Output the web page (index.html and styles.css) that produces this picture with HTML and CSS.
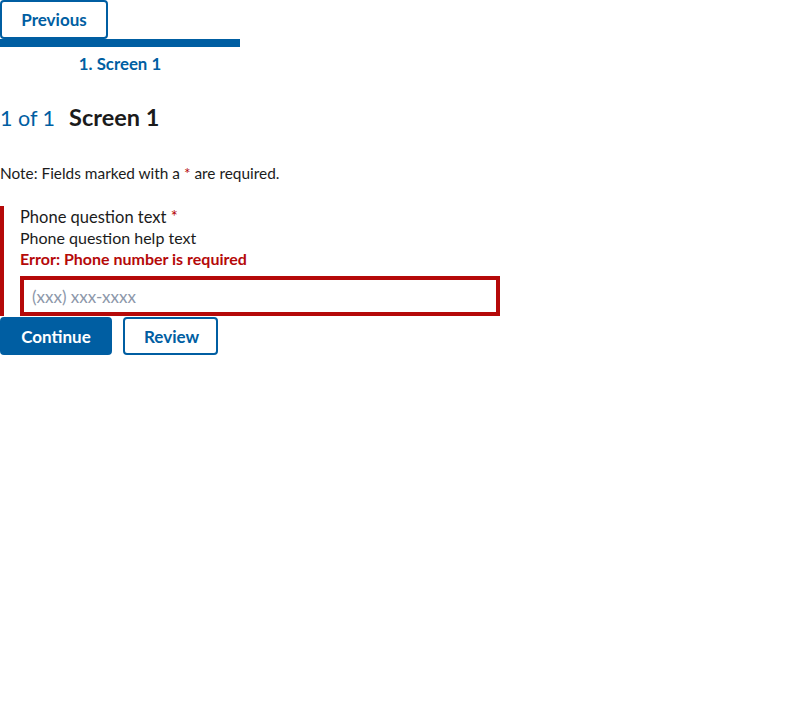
FILE: index.html
```html
<!DOCTYPE html>
<html>
<head>
<meta charset="utf-8">
<link rel="stylesheet" href="styles.css">
</head>
<body>
<div class="page">
  <button class="btn btn-outline prev">Previous</button>
  <div class="steps">
    <div class="step">
      <div class="step-bar"></div>
      <div class="step-label">1. Screen 1</div>
    </div>
  </div>
  <h2 class="heading"><span class="counter">1 of 1</span><span class="title">Screen 1</span></h2>
  <p class="note">Note: Fields marked with a <span class="req">*</span> are required.</p>
  <div class="form-group error">
    <label class="label">Phone question text <span class="req">*</span></label>
    <div class="hint">Phone question help text</div>
    <div class="err-msg">Error: Phone number is required</div>
    <input class="input" type="text" placeholder="(xxx) xxx-xxxx">
  </div>
  <div class="actions">
    <button class="btn btn-primary">Continue</button>
    <button class="btn btn-outline">Review</button>
  </div>
</div>
</body>
</html>
```
FILE: styles.css
```css
* { box-sizing: border-box; }
body {
  margin: 0;
  font-family: "Source Sans Pro", "Lato", "Liberation Sans", sans-serif;
  color: #1b1b1b;
  background: #fff;
}
.page { display: flex; flex-direction: column; align-items: flex-start; }
.btn {
  font-family: inherit;
  font-size: 17px;
  font-weight: 700;
  border-radius: 4px;
  height: 38px;
  padding: 0 19px;
  cursor: pointer;
  line-height: 1;
}
.btn-outline {
  background: #fff;
  color: #005ea2;
  border: 2px solid #005ea2;
}
.btn-primary {
  background: #005ea2;
  color: #fff;
  border: 2px solid #005ea2;
}
.prev { width: 108px; height: 39px; }
.steps { display: flex; width: 240px; margin-top: 0; }
.step { flex: 1; display: flex; flex-direction: column; align-items: center; }
.step-bar { width: 100%; height: 8px; background: #005ea2; }
.step-label {
  margin-top: 7px;
  font-size: 16.8px;
  font-weight: 700;
  color: #005ea2;
  line-height: 20px;
}
.heading {
  margin: 28px 0 0;
  display: flex;
  align-items: baseline;
  line-height: 30px;
}
.counter { font-size: 21.5px; font-weight: 400; color: #005ea2; margin-right: 14px; }
.title { font-size: 23.5px; font-weight: 700; color: #1b1b1b; }
.note { margin: 30px 0 0; font-size: 15.4px; line-height: 20px; }
.req { color: #b50909; }
.form-group {
  margin-top: 23px;
  padding-left: 16px;
  border-left: 4px solid #b50909;
  display: flex;
  flex-direction: column;
  align-items: flex-start;
}
.label { font-size: 16.5px; line-height: 22px; }
.hint { font-size: 16px; line-height: 20px; }
.err-msg { font-size: 16px; font-weight: 700; color: #b50909; line-height: 22px; margin-top: 0; }
.input {
  margin-top: 6px;
  width: 480px;
  height: 40px;
  border: 4px solid #b50909;
  padding: 0 8px;
  font-family: inherit;
  font-size: 17px;
  color: #1b1b1b;
  outline: none;
}
.input::placeholder { color: #8d98aa; }
.actions { display: flex; gap: 11px; margin-top: 1px; }
.actions .btn-primary { width: 112px; }
.actions .btn-outline { width: 95px; }
```
